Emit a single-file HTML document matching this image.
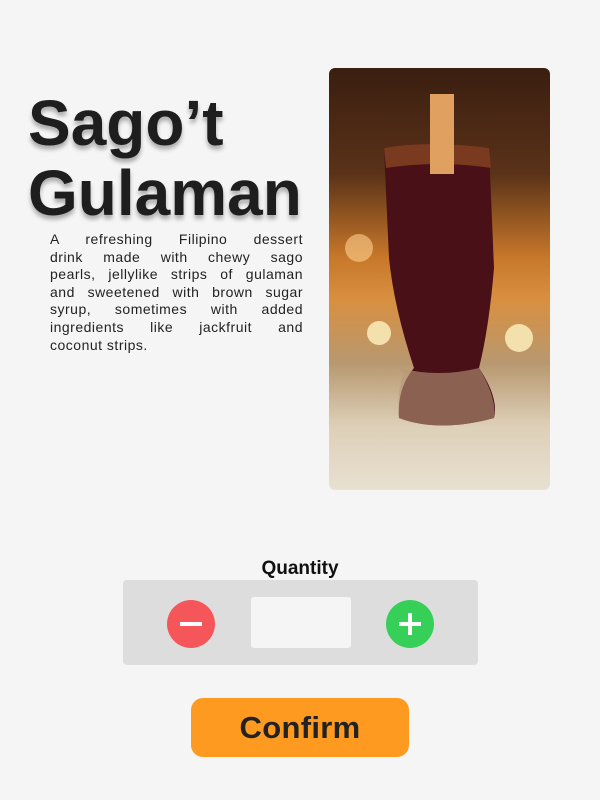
<!DOCTYPE html>
<html><head><meta charset="utf-8"><style>
body{margin:0;width:600px;height:800px;background:#f5f5f5;font-family:"Liberation Sans",sans-serif;position:relative;overflow:hidden}
.t{position:absolute;left:28px;font-weight:bold;font-size:64px;color:#1e1e1e;letter-spacing:0;text-shadow:0 4px 4px rgba(0,0,0,.3);line-height:70px}
.d{position:absolute;left:50px;top:231px;width:253px;font-size:14px;line-height:17.6px;color:#222;letter-spacing:.5px}
.d div{text-align:justify;text-align-last:justify;white-space:nowrap}
.d div.l{text-align-last:left}
.img{position:absolute;left:329px;top:68px;width:221px;height:422px;border-radius:6px;overflow:hidden;background:linear-gradient(180deg,#3a1e10 0%,#5a3218 25%,#c8782a 45%,#d89040 55%,#b89870 70%,#ddd0b8 85%,#e8e0d0 100%)}
.q{position:absolute;left:0;width:600px;top:558px;text-align:center;font-weight:bold;font-size:19px;color:#111}
.box{position:absolute;left:123px;top:580px;width:355px;height:85px;background:#dddddd;border-radius:4px}
.c{position:absolute;top:600px;width:48px;height:48px;border-radius:50%}
.in{position:absolute;left:251px;top:597px;width:100px;height:51px;background:#f5f5f5;border-radius:3px}
.btn{position:absolute;left:191px;top:698px;width:218px;height:59px;background:#fe9a20;border-radius:12px;text-align:center;line-height:59px;font-weight:bold;font-size:31px;color:#222;letter-spacing:.3px}
</style></head><body>
<div class="t" style="top:88px">Sago’t</div>
<div class="t" style="top:158px">Gulaman</div>
<div class="d">
<div>A refreshing Filipino dessert</div>
<div>drink made with chewy sago</div>
<div>pearls, jellylike strips of gulaman</div>
<div>and sweetened with brown sugar</div>
<div>syrup, sometimes with added</div>
<div>ingredients like jackfruit and</div>
<div class="l">coconut strips.</div>
</div>
<div class="img">
<svg width="221" height="422" viewBox="0 0 221 422">
<circle cx="190" cy="270" r="14" fill="#fff3c0" opacity=".8"/>
<circle cx="50" cy="265" r="12" fill="#fff3c0" opacity=".8"/>
<circle cx="30" cy="180" r="14" fill="#ffd090" opacity=".6"/>
<path d="M55 80 Q100 72 160 80 L165 200 Q160 260 150 300 Q170 330 165 350 Q110 365 70 350 Q68 320 85 300 Q65 240 60 190 Z" fill="#4a1018"/>
<path d="M55 80 Q100 72 160 80 L162 100 Q110 92 57 100 Z" fill="#7a3a20"/>
<rect x="101" y="26" width="24" height="80" fill="#e0a060"/>
<path d="M70 300 Q110 310 150 300 Q168 330 165 350 Q110 365 70 350 Q68 320 75 305 Z" fill="#b89878" opacity=".6"/>
</svg>
</div>
<div class="q">Quantity</div>
<div class="box"></div>
<div class="c" style="left:167px;background:#f45659"><div style="position:absolute;left:13px;top:22px;width:22px;height:4px;background:#fff"></div></div>
<div class="in"></div>
<div class="c" style="left:386px;background:#36d058"><div style="position:absolute;left:13px;top:22px;width:22px;height:4px;background:#fff"></div><div style="position:absolute;left:22px;top:13px;width:4px;height:22px;background:#fff"></div></div>
<div class="btn">Confirm</div>
</body></html>
